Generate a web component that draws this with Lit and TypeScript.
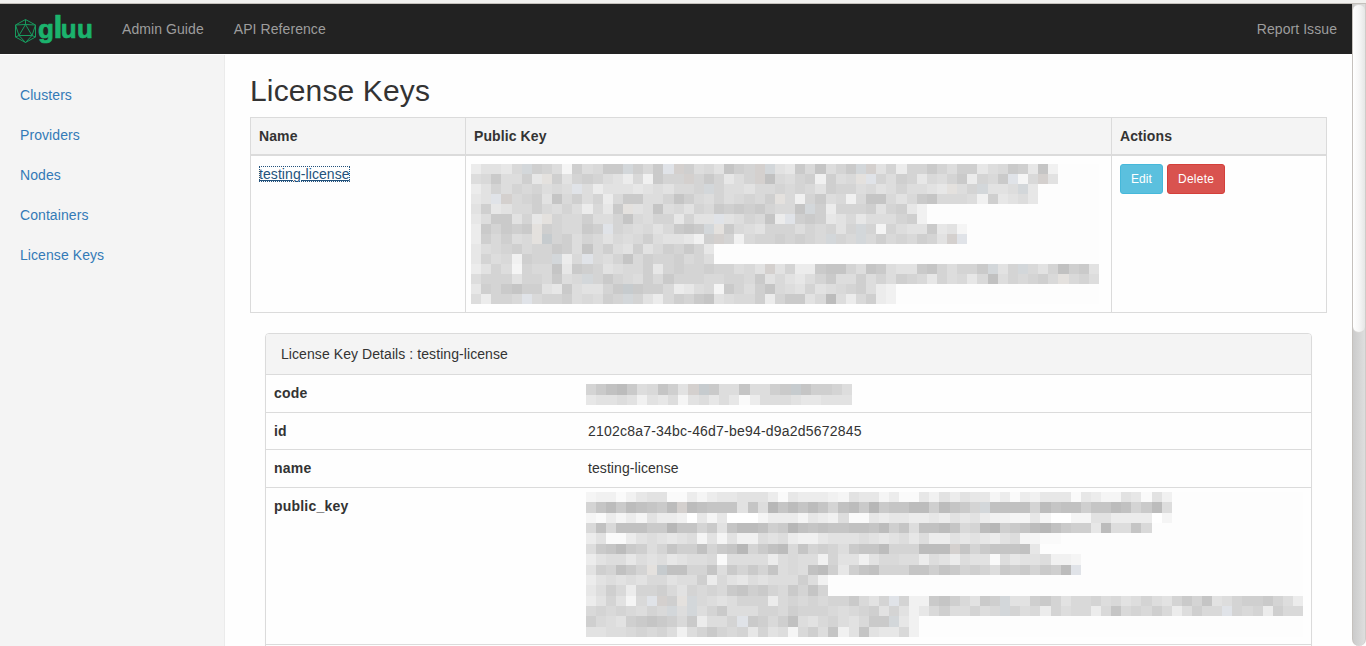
import { LitElement, html, svg, css } from "lit";
import { customElement, property } from "lit/decorators.js";

/* Cell shades: hex digits are a grey ramp, letters g-k are slightly tinted. */
const TINTS: Record<string, string> = {
  g: "rgb(224,227,232)",
  h: "rgb(228,225,222)",
  i: "rgb(211,215,218)",
  j: "rgb(212,208,206)",
  k: "rgb(198,203,206)",
};
const shade = (c: string) => {
  if (TINTS[c]) return TINTS[c];
  const v = 183 + Math.round(4.8 * parseInt(c, 16));
  return `rgb(${v},${v},${v})`;
};

const KEY_SMALL = [
  "b99a7i568d58744i574gj5879356ji9a" + "473864ij96b6646855a8745a3c",
  "874885ah5965689b7c466j646a86j278" + "65c587hg6856a7864b674gd7j9",
  "b968676878g8b999a989776i68897767" + "679566879868" + "89ah86i998ia",
  "a9gj765937586b7448863578687675h7" + "c6487c733797437778c5a98a",
  "95a9775786" + "8b7a4h98387967454" + "54677" + "3i5b66659" + "65ac",
  "a84496ah67758863786" + "6a699g98673bg" + "545a97a88865c",
  "b464" + "54h567745g678797434ih4789666" + "867696i6d68994a9d",
  "b57587hk65867978758" + "99ac5j6c76656" + "567i67i7576756" + "9jg",
  "a87657664583758959756" + "46a",
  "a687c566ib7g78637566" + "5768",
  "b968d6773a4569877" + "5a656656687" + "9j96" + "bb4336834899436866" + "4i96i7962549",
  "866696674" + "87i64678574666776674" + "979" + "a" + "864885868567a687a7286765" + "7h768",
  "a564355" + "9a4899" + "64k45" + "57ba87d46853" + "78" + "96987658bc",
  "8b667g766587856i69b7564398775b64" + "49718b75bc",
];

const KEY_LARGE = [
  "dccec" + "a99eebdbaa999beabbbcd9aadbeeac9" + "b9aadbebcaaaeabdd9ae9c",
  "631412341j12333938031313621404331151" + "346i222261322533126418",
  "debdbd9bbcfadafffdbbbdabc8eeabaabbab" + "9a9bccddadffdd99bbbbfd",
  "727222440336493112540232332231538221" + "37610543102455a18837",
  "b9eeb989a98d9d9cc898bcca99989a98a8bb" + "9a9ab98ddee",
  "843145863552643064217365684331666111" + "j3643332a",
  "b988a898a9887e8888b8788c699c97788b89" + "b899e8a998ccd",
  "956246hk226638464638782" + "15a5326663353" + "4656845464" + "51g",
  "b98989779885b79a89888" + "58c",
  "a857b6657967674354674636",
  "b969d7gj5hi7898666b7676766479" + "6g6cc43" + "57945i99546977687986896463986554" + "68b",
  "767678" + "67i8i8648886675666787659" + "69ca75" + "88687i687b6877b73767" + "57b8577g676b577",
  "57895434574b886g4575289768974" + "4iac",
  "998876768c864676a698d7583c939aa7c",
];

const CODE = ["64214873" + "59jk488388" + "54k35568", "a9989c9a8d98a8aeb8889aa999"];

@customElement("masked-value")
class MaskedValue extends LitElement {
  @property({ attribute: false }) rows: string[] = [];
  @property({ type: Number }) cols = 1;
  @property({ type: Number }) w = 100;
  @property({ type: Number }) h = 100;

  static styles = css`
    :host { display: block; }
    svg { display: block; background: #fdfdfd; }
  `;

  render() {
    const cw = this.w / this.cols;
    const ch = this.h / this.rows.length;
    return html`<svg width=${this.w} height=${this.h} shape-rendering="crispEdges" aria-hidden="true">
      ${this.rows.map((row, y) =>
        [...row].slice(0, this.cols).map(
          (c, x) => svg`<rect x=${x * cw} y=${y * ch} width=${cw} height=${ch} fill=${shade(c)}></rect>`
        )
      )}
    </svg>`;
  }
}

@customElement("gluu-logo")
class GluuLogo extends LitElement {
  static styles = css`
    :host { display: block; }
    svg { display: block; }
    .mesh { fill: none; stroke: #189a5e; stroke-width: 1; stroke-linejoin: round; }
    .word {
      font: bold 26px "Liberation Sans", Arial, sans-serif;
      fill: #1bb36d;
      stroke: #1bb36d;
      stroke-width: 0.7;
      stroke-linejoin: round;
    }
    .tall { font-size: 32px; }
  `;

  render() {
    return html`<svg width="80" height="50" viewBox="14 4 80 50" role="img" aria-label="gluu">
      <g class="mesh">
        <path d="M25.5 19.5 35.5 25 V37 L25.5 42.5 15.5 37 V25 Z" />
        <path d="M25.5 24.5 32 35.5 H19 Z" />
        <path d="M25.5 19.5V24.5 M15.5 25 25.5 24.5 35.5 25 32 35.5 35.5 37 M15.5 37 19 35.5 15.5 25 M19 35.5 25.5 42.5 32 35.5" />
      </g>
      <text class="word" y="37.5"><tspan x="38.1">g</tspan><tspan x="53.4" class="tall">l</tspan><tspan x="60.8">u</tspan><tspan x="77.1">u</tspan></text>
    </svg>`;
  }
}

@customElement("app-root")
class AppRoot extends LitElement {
  static styles = css`
    :host {
      display: flex;
      flex-direction: column;
      height: 646px;
      overflow: hidden;
      background: #fefefe;
      color: #333;
      font: 14px/20px "Liberation Sans", Arial, Helvetica, sans-serif;
      letter-spacing: 0.075px;
    }
    * { box-sizing: border-box; }
    a { color: #337ab7; text-decoration: none; }
    .chrome { flex: none; height: 4px; background: #f1f0ee; border-bottom: 1px solid #c4c0bb; }
    .window { flex: 1; min-height: 0; display: flex; }
    .page { flex: 1; min-width: 0; display: flex; flex-direction: column; overflow: hidden; }
    .nav {
      flex: none;
      height: 50px;
      display: flex;
      align-items: center;
      gap: 30px;
      padding: 0 15px 0 14px;
      background: #222;
    }
    .nav a { color: #9d9d9d; }
    .nav gluu-logo { margin-right: -2px; }
    .nav .end { margin-left: auto; }
    .body { flex: 1; min-height: 0; display: flex; overflow: hidden; }
    .side {
      flex: none;
      width: 225px;
      margin-top: 1px;
      padding: 20px 0;
      background: #f4f4f4;
      border-right: 1px solid #ebebeb;
      display: flex;
      flex-direction: column;
    }
    .side a { padding: 10px 20px; }
    .main { flex: 1; padding: 20px 25px; }
    h2 { margin: 0 0 10px; font-size: 30px; line-height: 33px; font-weight: 500; letter-spacing: 0.14px; }
    .keys { border: 1px solid #dbdbdb; width: 1077px; }
    .keys .row { display: grid; grid-template-columns: 214px 646px 215px; }
    .keys .row > div { padding: 8px; }
    .keys .row > div + div { border-left: 1px solid #dbdbdb; }
    .keys .head { height: 38px; background: #f4f4f4; border-bottom: 2px solid #dbdbdb; font-weight: bold; letter-spacing: 0.1px; }
    .keys .data { height: 156px; }
    .keys .data > .masked { padding: 8px 0 0 5px; }
    .focused { color: #23527c; text-decoration: underline; outline: 1px dotted #23527c; outline-offset: -1px; }
    .actions { display: flex; align-items: flex-start; gap: 4px; }
    .btn {
      padding: 5px 10px;
      border: 1px solid;
      border-radius: 3px;
      font: 12px/18px "Liberation Sans", Arial, sans-serif;
      color: #fff;
    }
    .info { background: #5bc0de; border-color: #46b8da; }
    .danger { background: #d9534f; border-color: #d43f3a; letter-spacing: 0.25px; }
    .panel {
      width: 1047px;
      margin: 20px 0 0 15px;
      border: 1px solid #dbdbdb;
      border-radius: 4px;
      box-shadow: 0 1px 1px rgba(0, 0, 0, 0.05);
    }
    .title { padding: 10px 15px; height: 40px; background: #f4f4f4; border-radius: 3px 3px 0 0; }
    .detail { display: grid; grid-template-columns: 314px 1fr; border-top: 1px solid #dbdbdb; }
    .detail > div { padding: 8px; }
    .detail .label { font-weight: bold; letter-spacing: 0.2px; }
    .detail .uuid { letter-spacing: 0.21px; }
    .detail .masked { padding: 9px 0 0 6px; }
    .detail .big { padding-top: 4px; }
    .h38 { height: 38px; }
    .h37 { height: 37px; }
    .h157 { height: 157px; }
    .scroll {
      flex: none;
      width: 14px;
      border-left: 1px solid #c5c1bd;
      background: linear-gradient(90deg, #cbcbcb, #dedede);
      border-right: 1px solid #cfccc9;
      border-radius: 0 0 7px 7px;
    }
    .thumb {
      height: 329px;
      border: 1px solid #dad8d6;
      border-width: 1px 0;
      border-radius: 6px;
      background: linear-gradient(90deg, #fff, #f6f6f6 50%, #e6e6e6);
    }
  `;

  render() {
    const links = ["Clusters", "Providers", "Nodes", "Containers", "License Keys"];
    return html`
      <div class="chrome"></div>
      <div class="window">
        <div class="page">
          <nav class="nav">
            <gluu-logo></gluu-logo>
            <a>Admin Guide</a>
            <a>API Reference</a>
            <a class="end">Report Issue</a>
          </nav>
          <div class="body">
            <aside class="side">${links.map((l) => html`<a>${l}</a>`)}</aside>
            <main class="main">
              <h2>License Keys</h2>
              <div class="keys">
                <div class="row head"><div>Name</div><div>Public Key</div><div>Actions</div></div>
                <div class="row data">
                  <div><a class="focused">testing-license</a></div>
                  <div class="masked"><masked-value .rows=${KEY_SMALL} .cols=${62} .w=${628} .h=${140}></masked-value></div>
                  <div class="actions"><a class="btn info">Edit</a><a class="btn danger">Delete</a></div>
                </div>
              </div>
              <section class="panel">
                <div class="title">License Key Details : testing-license</div>
                <div class="detail h38">
                  <div class="label">code</div>
                  <div class="masked"><masked-value .rows=${CODE} .cols=${26} .w=${266} .h=${21}></masked-value></div>
                </div>
                <div class="detail h37"><div class="label">id</div><div class="uuid">2102c8a7-34bc-46d7-be94-d9a2d5672845</div></div>
                <div class="detail h38"><div class="label">name</div><div>testing-license</div></div>
                <div class="detail h157">
                  <div class="label">public_key</div>
                  <div class="masked big"><masked-value .rows=${KEY_LARGE} .cols=${71} .w=${717} .h=${145}></masked-value></div>
                </div>
                <div class="detail h38"></div>
              </section>
            </main>
          </div>
        </div>
        <div class="scroll"><div class="thumb"></div></div>
      </div>
    `;
  }
}
